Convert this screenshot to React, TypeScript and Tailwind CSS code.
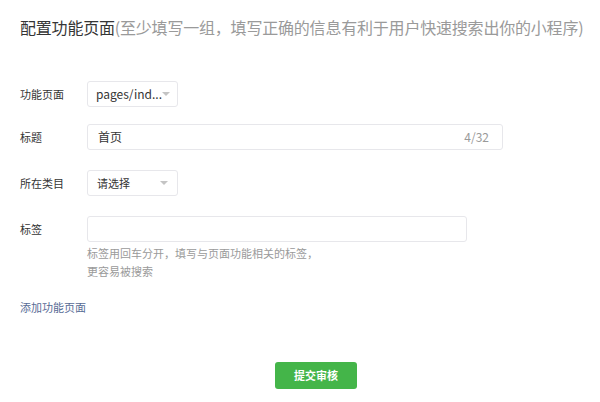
import React from 'react';

const font = "font-['Microsoft_YaHei','Noto_Sans_CJK_SC',sans-serif]";

const Caret = () => (
  <svg width="8" height="5" viewBox="0 0 8 5" className="shrink-0">
    <path d="M0 0 L8 0 L4 4 Z" fill="#c4c4c4" />
  </svg>
);

const Row = ({ label, children }: { label: string; children: React.ReactNode }) => (
  <div className="flex items-start">
    <div className="w-[67px] shrink-0 h-[26px] flex items-center text-[11px] text-[#353535]">{label}</div>
    <div className="flex flex-col">{children}</div>
  </div>
);

export default function App() {
  return (
    <div className={`${font} w-[600px] h-[402px] bg-white pl-[20px] pt-[17px] overflow-hidden`}>
      <h2 className="text-[16px] leading-[20px] text-[#353535] whitespace-nowrap tracking-[-0.2px]">
        配置功能页面<span className="text-[#9a9a9a]">(至少填写一组，填写正确的信息有利于用户快速搜索出你的小程序)</span>
      </h2>

      <div className="mt-[44px] flex flex-col">
        <Row label="功能页面">
          <div className="w-[91px] h-[26px] border border-[#e7e7eb] rounded-[3px] flex items-center justify-between pl-[8px] pr-[9px] text-[12px] text-[#353535]">
            <span>pages/ind...</span>
            <Caret />
          </div>
        </Row>

        <div className="mt-[17px]">
          <Row label="标题">
            <div className="w-[416px] h-[26px] border border-[#e7e7eb] rounded-[3px] flex items-center justify-between pl-[10px] pr-[13px] text-[11px]">
              <span className="text-[#353535] text-[12px]">首页</span>
              <span className="text-[#9a9a9a] text-[12px]">4/32</span>
            </div>
          </Row>
        </div>

        <div className="mt-[20px]">
          <Row label="所在类目">
            <div className="w-[91px] h-[26px] border border-[#e7e7eb] rounded-[3px] flex items-center justify-between pl-[9px] pr-[9px] text-[11px] text-[#353535]">
              <span>请选择</span>
              <Caret />
            </div>
          </Row>
        </div>

        <div className="mt-[20px]">
          <Row label="标签">
            <div className="w-[380px] h-[26px] border border-[#e7e7eb] rounded-[3px]" />
            <p className="mt-[2px] text-[11px] leading-[18px] text-[#9a9a9a]">
              标签用回车分开，填写与页面功能相关的标签，
              <br />
              更容易被搜索
            </p>
          </Row>
        </div>
      </div>

      <a className="block mt-[18px] text-[11px] leading-[18px] text-[#576b95] w-fit">添加功能页面</a>

      <button className="mt-[46px] ml-[255px] w-[82px] h-[27px] rounded-[3px] bg-[#44b549] text-white text-[11px] font-bold flex items-center justify-center">
        提交审核
      </button>
    </div>
  );
}
